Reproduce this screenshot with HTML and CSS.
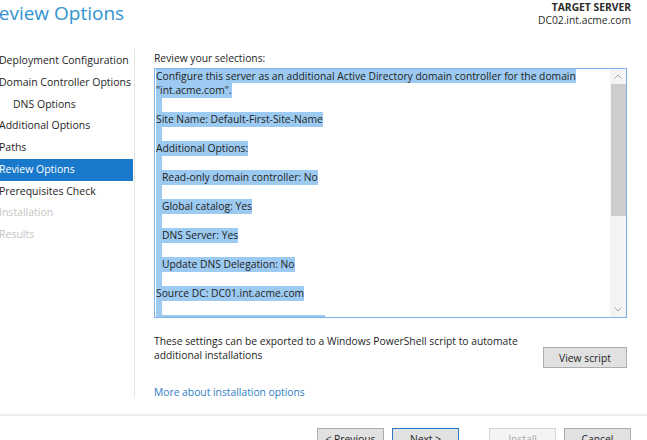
FILE: index.html
```html
<!DOCTYPE html>
<html>
<head>
<meta charset="utf-8">
<link rel="stylesheet" href="styles.css">
</head>
<body>
<div class="window">
  <header class="header">
    <h1 class="title">Review Options</h1>
    <div class="target">
      <div class="target-label">TARGET SERVER</div>
      <div class="target-name">DC02.int.acme.com</div>
    </div>
  </header>
  <div class="main">
    <nav class="nav">
      <div class="nav-item">Deployment Configuration</div>
      <div class="nav-item">Domain Controller Options</div>
      <div class="nav-item sub">DNS Options</div>
      <div class="nav-item">Additional Options</div>
      <div class="nav-item">Paths</div>
      <div class="nav-item active">Review Options</div>
      <div class="nav-item">Prerequisites Check</div>
      <div class="nav-item disabled">Installation</div>
      <div class="nav-item disabled">Results</div>
    </nav>
    <section class="content">
      <div class="label">Review your selections:</div>
      <div class="textbox">
        <div class="text">
          <div class="line"><span class="sel">Configure this server as an additional Active Directory domain controller for the domain</span></div>
          <div class="line"><span class="sel">"int.acme.com".</span></div>
          <div class="line"><span class="sel blank"></span></div>
          <div class="line"><span class="sel">Site Name: Default-First-Site-Name</span></div>
          <div class="line"><span class="sel blank"></span></div>
          <div class="line"><span class="sel">Additional Options:</span></div>
          <div class="line"><span class="sel blank"></span></div>
          <div class="line"><span class="sel ind">Read-only domain controller: No</span></div>
          <div class="line"><span class="sel blank"></span></div>
          <div class="line"><span class="sel ind">Global catalog: Yes</span></div>
          <div class="line"><span class="sel blank"></span></div>
          <div class="line"><span class="sel ind">DNS Server: Yes</span></div>
          <div class="line"><span class="sel blank"></span></div>
          <div class="line"><span class="sel ind">Update DNS Delegation: No</span></div>
          <div class="line"><span class="sel blank"></span></div>
          <div class="line"><span class="sel">Source DC: DC01.int.acme.com</span></div>
          <div class="line"><span class="sel blank"></span></div>
          <div class="line"><span class="sel">Database folder: C:\Windows\NTDS</span></div>
        </div>
        <div class="scrollbar">
          <div class="arrow">
            <svg width="8" height="5" viewBox="0 0 8 5"><path d="M0.5 4.5 L4 1 L7.5 4.5" fill="none" stroke="#a6a6a6" stroke-width="1"/></svg>
          </div>
          <div class="track"><div class="thumb"></div></div>
          <div class="arrow">
            <svg width="8" height="5" viewBox="0 0 8 5"><path d="M0.5 0.5 L4 4 L7.5 0.5" fill="none" stroke="#a6a6a6" stroke-width="1"/></svg>
          </div>
        </div>
      </div>
      <div class="export">
        <div class="export-text">These settings can be exported to a Windows PowerShell script to automate<br>additional installations</div>
        <button class="btn view">View script</button>
      </div>
      <a class="link">More about installation options</a>
    </section>
  </div>
  <footer class="footer">
    <button class="btn">&lt; Previous</button>
    <button class="btn default">Next &gt;</button>
    <button class="btn disabled install">Install</button>
    <button class="btn">Cancel</button>
  </footer>
</div>
</body>
</html>
```
FILE: styles.css
```css
html, body {
  margin: 0;
  padding: 0;
  background: #ffffff;
}
body {
  width: 647px;
  height: 440px;
  overflow: hidden;
  font-family: "Open Sans", "Noto Sans", sans-serif;
  font-size: 10.3px;
  color: #1e1e1e;
}
.window {
  margin-left: -13px;
  width: 660px;
  height: 440px;
  display: flex;
  flex-direction: column;
}
.header {
  flex-shrink: 0;
  height: 49px;
  display: flex;
  justify-content: space-between;
  align-items: flex-start;
}
.title {
  margin: 0;
  font-weight: normal;
  font-size: 19px;
  line-height: 26px;
  color: #3192cf;
}
.target {
  padding-top: 1px;
  padding-right: 16px;
  text-align: right;
  line-height: 13px;
  color: #2b2b2b;
}
.target-label {
  font-weight: bold;
}
.main {
  flex-shrink: 0;
  height: 365px;
  display: flex;
  align-items: flex-start;
}
.nav {
  flex-shrink: 0;
  width: 148px;
  height: 348px;
  padding-top: 1px;
  box-sizing: border-box;
  border-right: 1px solid #e4e4e4;
  font-size: 10.5px;
}
.nav-item {
  height: 21.75px;
  line-height: 21.75px;
  padding-left: 12px;
  margin-right: 1px;
  white-space: nowrap;
  color: #1e1e1e;
}
.nav-item.sub {
  padding-left: 26px;
}
.nav-item.active {
  background: #1979ca;
  color: #ffffff;
}
.nav-item.disabled {
  color: #c4c4c4;
}
.content {
  flex: 1;
  padding-left: 19px;
  padding-right: 20px;
  padding-top: 2px;
}
.label {
  line-height: 14px;
  margin-bottom: 3px;
}
.textbox {
  height: 250px;
  box-sizing: border-box;
  border: 1px solid #7cb2e8;
  display: flex;
}
.text {
  flex: 1;
  overflow: hidden;
  padding-left: 1px;
  white-space: nowrap;
}
.line {
  height: 14.47px;
}
.sel {
  display: inline-block;
  height: 14.47px;
  line-height: 14.47px;
  background: #9dcaf0;
  vertical-align: top;
}
.sel.blank {
  width: 6px;
}
.sel.ind {
  padding-left: 6px;
}
.scrollbar {
  flex-shrink: 0;
  width: 16px;
  background: #f4f4f4;
  display: flex;
  flex-direction: column;
}
.arrow {
  height: 15px;
  display: flex;
  align-items: center;
  justify-content: center;
}
.track {
  flex: 1;
}
.thumb {
  height: 132px;
  background: #cdcdcd;
  margin-left: 1px;
}
.export {
  margin-top: 16px;
  display: flex;
  justify-content: space-between;
  align-items: flex-start;
}
.export-text {
  line-height: 14px;
}
.btn {
  font-family: "Open Sans", "Noto Sans", sans-serif;
  font-size: 10.3px;
  color: #1e1e1e;
  background: #e1e1e1;
  border: 1px solid #adadad;
  width: 67px;
  height: 22px;
  padding: 0;
  margin: 0;
  flex-shrink: 0;
}
.btn.view {
  width: 84px;
  height: 21px;
  margin-top: 13px;
}
.btn.default {
  border-color: #2f78c4;
}
.btn.disabled {
  background: #f4f4f4;
  border-color: #d5d5d5;
  color: #a8a8a8;
}
.link {
  display: block;
  margin-top: 17px;
  line-height: 14px;
  color: #2f7dc7;
}
.footer {
  flex-shrink: 0;
  border-top: 2px solid #ededed;
  padding-top: 12px;
  padding-right: 16px;
  display: flex;
  justify-content: flex-end;
  gap: 8px;
}
.footer .install {
  margin-left: 22px;
}
```
